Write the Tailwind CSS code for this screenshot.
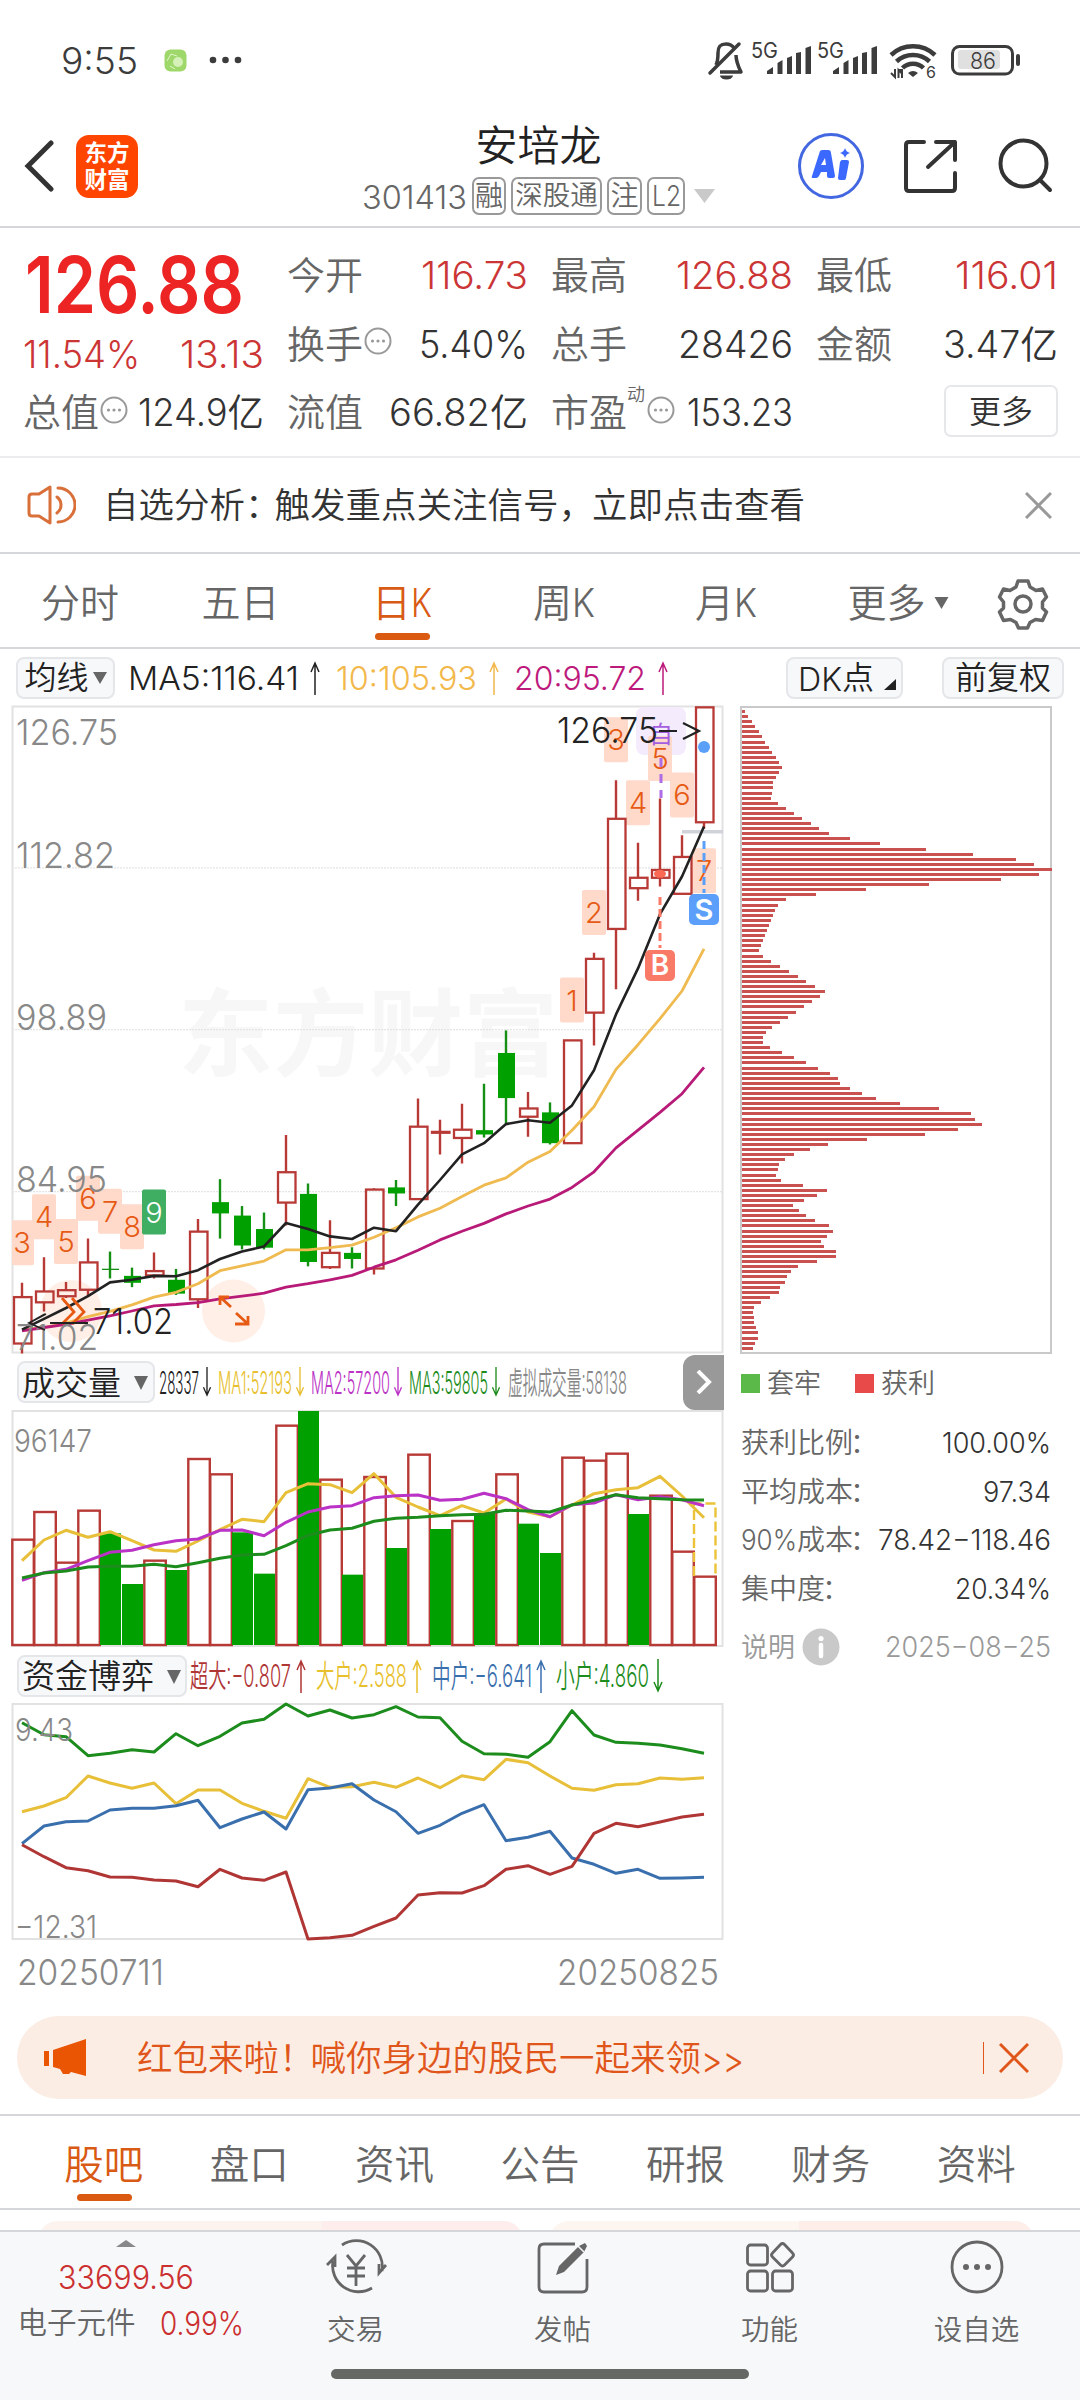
<!DOCTYPE html>
<html lang="zh-CN">
<head>
<meta charset="utf-8">
<title>安培龙 301413</title>
<script src="https://cdn.jsdelivr.net/npm/@tailwindcss/browser@4"></script>
</head>
<body class="w-[1080px] h-[2400px] overflow-hidden bg-white text-[#333] font-['Inter','Noto_Sans_CJK_SC',sans-serif] font-[350] leading-none whitespace-nowrap">
<svg class="hidden">
  <symbol id="up" viewBox="0 0 14 34"><path d="M7 34V3M3 11L7 2l4 9" fill="none" stroke="currentColor" stroke-width="1.500"/></symbol>
  <symbol id="down" viewBox="0 0 14 34"><path d="M7 0v31M3 23L7 32l4-9" fill="none" stroke="currentColor" stroke-width="1.500"/></symbol>
  <symbol id="more" viewBox="0 0 28 28"><circle cx="14" cy="14" r="12.500" fill="none" stroke="#999" stroke-width="2"/><g fill="#999"><circle cx="8.500" cy="14" r="1.600"/><circle cx="14" cy="14" r="1.600"/><circle cx="19.500" cy="14" r="1.600"/></g></symbol>
  <symbol id="tri" viewBox="0 0 14 12"><path d="M0 0h14L7 12z" fill="currentColor"/></symbol>
</svg>
<div class="flex flex-col w-[1080px] h-[2400px]">

<!-- status bar -->
<div class="h-[100px] pt-[20px] pl-[61px] flex items-center shrink-0 text-[#3c3c3c]">
  <span data-w="77" class="text-[37px]">9:55</span>
  <svg class="ml-[26px] w-[23px] h-[23px]" viewBox="0 0 23 23"><rect x=".5" y=".5" width="22" height="22" rx="6" fill="#9fd86a"/><circle cx="14" cy="13" r="5" fill="#d5f0b8"/><path d="M3 12l4-7 6 2M6 17l5 3" stroke="#e2f6cd" fill="none"/></svg>
  <svg class="ml-[22px] w-[34px] h-[8px]" viewBox="0 0 34 8"><g fill="#3c3c3c"><circle cx="4" cy="4" r="3.300"/><circle cx="16.500" cy="4" r="3.300"/><circle cx="29" cy="4" r="3.300"/></g></svg>
  <svg class="ml-[463px] w-[320px] h-[44px]" viewBox="706 38 320 44" fill="none" stroke="#3c3c3c">
    <path d="M716 65c2-4 2-8 2-12 0-8 4-9 8-9s6 1 8 4" stroke-width="3.500"/><path d="M736 55c0 7 2 11 5 17H720" stroke-width="3.500" stroke-linejoin="round"/><path d="M710 73L739 44" stroke-width="3.500" stroke-linecap="round"/><path d="M720 75.500h13a6.500 4 0 0 1-13 0z" fill="#3c3c3c" stroke="none"/>
    <g fill="#3c3c3c" stroke="none"><text x="751" y="58" font-size="21" font-weight="400" textLength="27" lengthAdjust="spacingAndGlyphs">5G</text><text x="817" y="58" font-size="21" font-weight="400" textLength="27" lengthAdjust="spacingAndGlyphs">5G</text>
    <path d="M767 74v-3l6-4v7zM777.500 74V63l5-3v14zM787 74V58l5-2v18zM796 74V53l5-1v22zM805.500 74V48l5.500-2v28z"/><path d="M833 74v-3l6-4v7zM843.500 74V63l5-3v14zM853 74V58l5-2v18zM862 74V53l5-1v22zM871.500 74V48l5.500-2v28z"/>
    <path d="M913 77l-5-4a8 8 0 0 1 10 0z"/><text x="926" y="78" font-size="16" font-weight="400">6</text></g>
    <path d="M891 55a32 32 0 0 1 44 0M896.500 61.500a24 24 0 0 1 33 0M902.500 68a15 15 0 0 1 21 0" stroke-width="4.500"/><path d="M891 73l4 4v-8M902 78v-8l-3 0M898.500 78v-8l4 4" stroke-width="2"/>
    <rect x="952.500" y="46.500" width="60" height="27.500" rx="7" stroke-width="3"/><rect x="958" y="50" width="42" height="19" rx="3" fill="#e0e0e0" stroke="none"/><path d="M1018 56v8" stroke-width="4" stroke-linecap="round"/><text x="970" y="69" font-size="23" fill="#3c3c3c" stroke="none" textLength="26" lengthAdjust="spacingAndGlyphs">86</text>
  </svg>
</div>

<!-- title bar -->
<div class="h-[128px] shrink-0 border-b-2 border-[#d6d7da] flex justify-between pl-[24px] pr-[26px]">
  <div class="flex w-[300px] h-[132px] items-center">
    <svg class="w-[32px] h-[52px]" viewBox="0 0 32 52"><path d="M27 3L4 26l23 23" fill="none" stroke="#333" stroke-width="5" stroke-linecap="round"/></svg>
    <div class="ml-[20px] w-[62px] h-[63px] rounded-[13px] bg-[#ff4500] text-white font-bold text-[22.500px] leading-[27px] flex flex-col items-center justify-center"><span>东方</span><span>财富</span></div>
  </div>
  <div class="flex flex-col items-center w-[400px] pt-[22px]">
    <div class="text-[42px] leading-[48px] text-[#222] mr-[1px]">安培龙</div>
    <div class="flex items-center mt-[7px] mr-[1px] text-[#666] text-[28px]">
      <span data-w="105" class="text-[33px]">301413</span>
      <span class="ml-[5px] w-[34px] h-[38px] border-2 border-[#999] rounded-[7px] flex items-center justify-center">融</span>
      <span class="ml-[5px] w-[91px] h-[38px] border-2 border-[#999] rounded-[7px] flex items-center justify-center text-[27.500px]">深股通</span>
      <span class="ml-[5px] w-[35px] h-[38px] border-2 border-[#999] rounded-[7px] flex items-center justify-center">注</span>
      <span class="ml-[5px] w-[38px] h-[38px] border-2 border-[#999] rounded-[7px] flex items-center justify-center"><span data-w="29" class="text-[28px]">L2</span></span>
      <svg class="ml-[9px] w-[21px] h-[14px] text-[#c9c9c9]" preserveAspectRatio="none" viewBox="0 0 14 12"><path d="M0 0h14L7 12z" fill="currentColor"/></svg>
    </div>
  </div>
  <svg class="ml-[40px] mt-[30px] w-[260px] h-[70px]" viewBox="794 130 260 70" fill="none">
    <circle cx="831" cy="166" r="31.500" stroke="#4267e0" stroke-width="3"/>
    <path fill-rule="evenodd" d="M820 151q1-1 3-1h5q3 0 3 3l4 23q0 2-2 2h-4q-2 0-2-2v-4h-6l-2 4q-1 2-3 2h-3q-2 0-1-2zM821 165h5l-1-7zM840 162q1-2 2-2h5q2 0 2 2l-3 16q0 2-2 2h-4q-2 0-2-2zM845 148q1 4 5 5q-4 1-5 5q-1-4-5-5q4-1 5-5z" fill="#3b68ff"/>
    <path d="M924 142h-15q-3 0-3 3v43q0 3 3 3h43q3 0 3-3v-15M936 142h19v18M955 142l-27 25" stroke="#333" stroke-width="4" stroke-linecap="round" stroke-linejoin="round"/>
    <circle cx="1023.500" cy="163.500" r="23" stroke="#333" stroke-width="4"/><path d="M1040 180l10 10" stroke="#333" stroke-width="4" stroke-linecap="round"/>
  </svg>
</div>

<!-- quote -->
<div class="h-[230px] shrink-0 border-b-2 border-[#ececee] flex gap-[24px] pl-[23px] text-[38px] text-[#666]">
  <div class="w-[241px] flex flex-col pt-[18px]">
    <div class="h-[78px] flex items-center text-[#ec2424] font-semibold"><span data-w="219" class="text-[78px] ml-[2px]">126.88</span></div>
    <div class="h-[60px] flex items-center justify-between text-[#cb3535]"><span data-w="117" class="text-[38px]">11.54%</span><span data-w="84" class="text-[38px]">13.13</span></div>
    <div class="h-[56px] flex items-center"><span>总值</span><svg class="w-[28px] h-[28px] ml-[1px] -mt-[4px]"><use href="#more"/></svg><span data-w="126" class="text-[38px] ml-auto text-[#333]">124.9亿</span></div>
  </div>
  <div class="w-[241px] flex flex-col pt-[12px] -ml-[1px]">
    <div class="h-[69px] flex items-center justify-between"><span>今开</span><span data-w="107" class="text-[38px] text-[#cb3535]">116.73</span></div>
    <div class="h-[69px] flex items-center"><span>换手</span><svg class="w-[28px] h-[28px] ml-[1px] -mt-[6px]"><use href="#more"/></svg><span data-w="109" class="text-[38px] ml-auto text-[#333]">5.40%</span></div>
    <div class="h-[68px] flex items-center justify-between"><span>流值</span><span data-w="139" class="text-[38px] text-[#333]">66.82亿</span></div>
  </div>
  <div class="w-[242px] flex flex-col pt-[12px] -ml-[1px]">
    <div class="h-[69px] flex items-center justify-between"><span>最高</span><span data-w="117" class="text-[38px] text-[#cb3535]">126.88</span></div>
    <div class="h-[69px] flex items-center justify-between"><span>总手</span><span data-w="115" class="text-[38px] text-[#333]">28426</span></div>
    <div class="h-[68px] flex items-center"><span>市盈</span><span class="text-[18px] -mt-[34px] -mr-[2px]">动</span><svg class="w-[28px] h-[28px] ml-[4px] -mt-[4px]"><use href="#more"/></svg><span data-w="106" class="text-[38px] ml-auto text-[#333]">153.23</span></div>
  </div>
  <div class="w-[242px] flex flex-col pt-[12px] -ml-[1px]">
    <div class="h-[69px] flex items-center justify-between"><span>最低</span><span data-w="103" class="text-[38px] text-[#cb3535]">116.01</span></div>
    <div class="h-[69px] flex items-center justify-between"><span>金额</span><span data-w="115" class="text-[38px] text-[#333]">3.47亿</span></div>
    <div class="h-[66px] flex items-center justify-end text-[#333]"><span class="w-[114px] h-[52px] border-2 border-[#e6e7e9] rounded-[7px] flex items-center justify-center text-[32px] pt-[2px]">更多</span></div>
  </div>
</div>

<!-- notice -->
<div class="h-[96px] shrink-0 border-b-2 border-[#d6d7da] flex items-center pl-[26px] pr-[28px]">
  <svg class="w-[50px] h-[42px]" viewBox="26 484 50 42" fill="none" stroke="#d9703a" stroke-width="3" stroke-linejoin="round" stroke-linecap="round"><path d="M50 487L39 494H32q-3 0-3 3v16q0 3 3 3h7l11 7zM57 497a10 10 0 0 1 0 16M58 488a17 17 0 0 1 0 34"/></svg>
  <span class="ml-[27px] pt-[1px] text-[35.500px] text-[#333]">自选分析<span class="tracking-[-6px]">：</span>触发重点关注信号<span class="tracking-[-2px]">，</span>立即点击查看</span>
  <svg class="ml-auto w-[27px] h-[27px]" viewBox="0 0 27 27"><path d="M1 1l25 25M26 1L1 26" stroke="#999" stroke-width="3"/></svg>
</div>

<!-- period tabs -->
<div class="h-[95px] shrink-0 border-b-2 border-[#d6d7da] flex text-[39px] text-[#666] *:pt-[4px]">
  <div class="w-[160px] flex items-center justify-center">分时</div>
  <div class="w-[161px] flex items-center justify-center">五日</div>
  <div class="w-[162px] relative flex items-center justify-center text-[#d85a14]">日<span data-w="21" class="text-[39px]">K</span><i class="absolute left-[54px] bottom-[7px] w-[55px] h-[7px] rounded-full bg-[#d95a10]"></i></div>
  <div class="w-[162px] flex items-center justify-center">周<span data-w="23" class="text-[39px]">K</span></div>
  <div class="w-[162px] flex items-center justify-center">月<span data-w="23" class="text-[39px]">K</span></div>
  <div class="w-[182px] flex items-center justify-center">更多<svg class="ml-[8px] w-[15px] h-[12px]"><use href="#tri"/></svg></div>
  <svg class="ml-[8px] mt-[20px] w-[52px] h-[56px]" viewBox="-26 -26 52 52" fill="none" stroke="#666" stroke-width="3.500" stroke-linejoin="round"><path d="M-5-23h10l2 6 6 3.500 6.500-1.500 4 8-4 5v6l4 4-4 8.500-7-1-5.500 3-2.500 5.500h-9l-2.500-5.500-5.500-3-7 1-4-8.500 4-4v-6l-4-5 4-8 6.500 1.500 6-3.500z"/><circle r="8"/></svg>
</div>

<!-- chart area -->
<div class="h-[1353px] shrink-0 flex flex-col">
  <div class="h-[57px] shrink-0 flex items-center pl-[16px] pr-[16px] text-[33px] text-[#222]">
    <span class="w-[99px] h-[42px] border-2 border-[#e4e6ea] rounded-[8px] bg-[#f7f8fa] flex items-center justify-center text-[32px] pt-[1px]">均线<svg class="ml-[4px] w-[14px] h-[12px] text-[#666]"><use href="#tri"/></svg></span>
    <span data-w="171" class="text-[33px] ml-[13px]">MA5:116.41</span><svg class="ml-[9px] w-[14px] h-[34px]"><use href="#up"/></svg>
    <span class="flex items-center text-[#f2b84b]"><span data-w="141" class="text-[33px] ml-[14px]">10:105.93</span><svg class="ml-[10px] w-[14px] h-[34px]"><use href="#up"/></svg></span>
    <span class="flex items-center text-[#bd1a7c]"><span data-w="132" class="text-[33px] ml-[13px]">20:95.72</span><svg class="ml-[10px] w-[14px] h-[34px]"><use href="#up"/></svg></span>
    <span class="ml-auto w-[117px] h-[42px] border-2 border-[#e4e6ea] rounded-[8px] bg-[#f7f8fa] flex items-center pl-[10px] pt-[1px] text-[32px]"><span data-w="44" class="text-[33px]">DK</span>点<svg class="ml-[10px] mt-[12px] w-[12px] h-[11px]" viewBox="0 0 12 11"><path d="M12 0v11H0z" fill="#222"/></svg></span>
    <span class="ml-[39px] w-[122px] h-[42px] border-2 border-[#e4e6ea] rounded-[8px] bg-[#f7f8fa] flex items-center justify-center text-[32px] pt-[1px]">前复权</span>
  </div>
  <div class="flex">
    <div class="w-[740px] flex flex-col">
      <svg id="price" class="w-[740px] h-[647px] overflow-visible shrink-0" viewBox="0 706 740 647"></svg>
      <div class="h-[58px] shrink-0 flex items-center pl-[17px] text-[31px]">
        <span class="w-[138px] h-[42px] border-2 border-[#e4e6ea] rounded-[8px] bg-[#f7f8fa] flex items-center pl-[3px] pt-[2px] text-[33px] text-[#222]">成交量<svg class="ml-[13px] w-[14px] h-[14px] text-[#666]" viewBox="0 0 14 12" preserveAspectRatio="none"><path d="M0 0h14L7 12z" fill="currentColor"/></svg></span>
        <span data-w="40" class="text-[31px] ml-[4px] text-[#222]">28337</span><svg class="ml-[1px] w-[14px] h-[30px] text-[#222]"><use href="#down"/></svg>
        <span data-w="74" class="text-[31px] ml-[4px] text-[#e8bf2e]">MA1:52193</span><svg class="ml-[1px] w-[14px] h-[30px] text-[#e8bf2e]"><use href="#down"/></svg>
        <span data-w="79" class="text-[31px] ml-[4px] text-[#bb33c6]">MA2:57200</span><svg class="ml-[1px] w-[14px] h-[30px] text-[#bb33c6]"><use href="#down"/></svg>
        <span data-w="79" class="text-[31px] ml-[4px] text-[#1c8c1c]">MA3:59805</span><svg class="ml-[1px] w-[14px] h-[30px] text-[#1c8c1c]"><use href="#down"/></svg>
        <span data-w="119" class="text-[31px] ml-[5px] text-[#888]">虚拟成交量:58138</span>
        <span class="ml-auto mr-[16px] w-[41px] h-[55px] rounded-l-[12px] bg-[#999] flex items-center justify-center"><svg class="w-[16px] h-[24px]" viewBox="0 0 16 24"><path d="M2 1l11 11L2 23" fill="none" stroke="#fff" stroke-width="4"/></svg></span>
      </div>
      <svg id="vol" class="w-[740px] h-[236px] overflow-visible shrink-0" viewBox="0 1411 740 236"></svg>
      <div class="h-[57px] shrink-0 flex items-center pl-[17px] text-[31px]">
        <span class="w-[170px] h-[42px] border-2 border-[#e4e6ea] rounded-[8px] bg-[#f7f8fa] flex items-center pl-[3px] pt-[2px] text-[33px] text-[#222]">资金博弈<svg class="ml-[13px] w-[14px] h-[14px] text-[#666]" viewBox="0 0 14 12" preserveAspectRatio="none"><path d="M0 0h14L7 12z" fill="currentColor"/></svg></span>
        <span data-w="101" class="text-[31px] ml-[3px] text-[#b03535]">超大:−0.807</span><svg class="ml-[3px] w-[14px] h-[34px] text-[#b03535]"><use href="#up"/></svg>
        <span data-w="91" class="text-[31px] ml-[8px] text-[#e8bf2e]">大户:2.588</span><svg class="ml-[3px] w-[14px] h-[34px] text-[#e8bf2e]"><use href="#up"/></svg>
        <span data-w="100" class="text-[31px] ml-[8px] text-[#3a6fae]">中户:−6.641</span><svg class="ml-[2px] w-[14px] h-[34px] text-[#3a6fae]"><use href="#up"/></svg>
        <span data-w="93" class="text-[31px] ml-[8px] text-[#1c8c1c]">小户:4.860</span><svg class="ml-[2px] w-[14px] h-[34px] text-[#1c8c1c]"><use href="#down"/></svg>
      </div>
      <svg id="fund" class="w-[740px] h-[236px] overflow-visible shrink-0" viewBox="0 1704 740 236"></svg>
      <div class="h-[64px] flex items-center justify-between pl-[17px] pr-[21px] text-[#888]"><span data-w="147" class="text-[35px]">20250711</span><span data-w="162" class="text-[35px]">20250825</span></div>
    </div>
    <div class="w-[340px] flex flex-col text-[28px] text-[#666]">
      <div class="w-[312px] h-[648px] border-2 border-[#c9c9c9] flex flex-col justify-between pt-[2px] pb-[1px]" id="chips"></div>
      <div class="flex items-center h-[58px] text-[27px]"><i class="w-[19px] h-[19px] bg-[#5ab948] mr-[7px] ml-[1px]"></i>套牢<i class="w-[19px] h-[19px] bg-[#e84a4a] ml-[34px] mr-[7px]"></i>获利</div>
      <div class="flex flex-col pt-[7px] pl-[1px] w-[311px] *:h-[48.500px] *:flex *:items-center *:justify-between">
        <div><span>获利比例<span class="-ml-[3px]">：</span></span><span data-w="109" class="text-[28px] text-[#333]">100.00%</span></div>
        <div><span>平均成本<span class="-ml-[3px]">：</span></span><span data-w="68" class="text-[28px] text-[#333]">97.34</span></div>
        <div><span class="flex items-center -mr-[16px]"><span data-w="56" class="text-[28px]">90%</span>成本<span class="-ml-[3px]">：</span></span><span data-w="173" class="text-[28px] text-[#333]">78.42−118.46</span></div>
        <div><span>集中度<span class="-ml-[3px]">：</span></span><span data-w="96" class="text-[28px] text-[#333]">20.34%</span></div>
      </div>
      <div class="flex items-center pl-[1px] w-[311px] h-[68px] text-[#999]"><span class="text-[27px]">说明</span><svg class="ml-[7px] w-[38px] h-[38px]" viewBox="0 0 38 38"><circle cx="19" cy="19" r="18.500" fill="#c9c9c9"/><circle cx="19" cy="10.500" r="2.600" fill="#fff"/><path d="M19 17v11" stroke="#fff" stroke-width="4.500" stroke-linecap="round"/></svg><span data-w="166" class="text-[28px] ml-auto">2025−08−25</span></div>
    </div>
  </div>
</div>

<!-- invitation -->
<div class="shrink-0 h-[115px] border-b-2 border-[#d6d7da] pt-[15px] px-[17px] -mt-[1px]">
  <div class="h-[83px] rounded-full bg-[#fcede4] flex items-center pl-[27px] pr-[34px] text-[#e0561a]">
    <svg class="w-[43px] h-[38px]" viewBox="0 0 43 38"><path d="M0 12h5v15H0zM9 11L42 0v37l-15-4-2 2h-6l-3-5-7-2z" fill="#ea5504"/></svg>
    <span class="ml-[50px] pt-[3px] text-[35.500px] flex items-center">红包来啦<span class="tracking-[-4px]">！</span>喊你身边的股民一起来领<span data-w="43" class="text-[37px]">&gt;&gt;</span></span>
    <i class="ml-auto w-px h-[32px] bg-[#e0561a]"></i>
    <svg class="ml-[15px] w-[30px] h-[30px]" viewBox="0 0 30 30"><path d="M1 1l28 28M29 1L1 29" stroke="#e0561a" stroke-width="3"/></svg>
  </div>
</div>

<!-- section tabs -->
<div class="shrink-0 h-[94px] border-b-2 border-[#d6d7da] flex px-[31px] text-[39.500px] text-[#666] *:flex-1 *:flex *:items-center *:justify-center *:pt-[7px]">
  <div class="relative text-[#d85a14]">股吧<i class="absolute left-[46px] bottom-[7px] w-[55px] h-[7px] rounded-full bg-[#d95a10]"></i></div><div>盘口</div><div>资讯</div><div>公告</div><div>研报</div><div>财务</div><div>资料</div>
</div>
<div class="shrink-0 h-[20px] pt-[11px] pl-[38px] flex gap-[26px] overflow-hidden">
  <div class="w-[485px] h-[40px] rounded-[20px] overflow-hidden flex bg-[#fdf3ee]"><i class="ml-[284px] flex-1 bg-[#fdeeed]"></i></div>
  <div class="w-[485px] h-[40px] rounded-[20px] overflow-hidden flex bg-[#fdf5f0]"><i class="ml-[250px] flex-1 bg-[#fdeeea]"></i></div>
</div>

<!-- bottom bar -->
<div class="flex-1 bg-[#f7f8fa] border-t-2 border-[#d4d6d9] flex flex-col items-center">
  <div class="w-full h-[137px] flex text-[28.500px] text-[#666]">
    <div class="w-[252px] flex flex-col items-center pt-[8px]">
      <svg class="w-[20px] h-[7px]" viewBox="0 0 20 7"><path d="M10 0l10 7H0z" fill="#888"/></svg>
      <span class="h-[58px] flex items-center text-[#cb2f2f]"><span data-w="136" class="text-[33px]">33699.56</span></span>
      <span class="h-[36px] flex items-center ml-[9px] text-[29.500px]">电子元件<span data-w="84" class="text-[32px] ml-[24px] text-[#cb2f2f]">0.99%</span></span>
    </div>
    <div class="w-[207px] flex flex-col items-center pt-[6px]">
      <svg class="w-[64px] h-[58px]" viewBox="323 2238 64 58" fill="none" stroke="#666" stroke-width="2.800"><path d="M341 2245a26 26 0 0 1 40 26M371 2288a26 26 0 0 1-39-27M326 2265l8-8 0 10M385 2265l-7 8v-9"/><path d="M346 2255l9 11 9-11M355 2266v20M346 2268h18M346 2276h18"/></svg><span class="mt-[20px]">交易</span></div>
    <div class="w-[207px] flex flex-col items-center pt-[6px]">
      <svg class="w-[64px] h-[58px]" viewBox="530 2238 64 58" fill="none" stroke="#666" stroke-width="2.800"><path d="M574 2244h-31q-5 0-5 5v38q0 5 5 5h38q5 0 5-5v-28"/><path d="M555 2275l3-9 20-20 6-3 2 3-3 6-20 20z" fill="#666" stroke="none"/><path d="M576 2245l7 7" stroke="#f7f8fa" stroke-width="1.500"/></svg><span class="mt-[20px]">发帖</span></div>
    <div class="w-[207px] flex flex-col items-center pt-[6px]">
      <svg class="w-[64px] h-[58px]" viewBox="737 2238 64 58" fill="none" stroke="#666" stroke-width="2.800"><rect x="746.500" y="2245" width="20" height="20" rx="3"/><rect x="746.500" y="2271" width="20" height="20" rx="3"/><rect x="771.500" y="2271" width="20" height="20" rx="3"/><path d="M779.500 2244.500q2-2 4 0l8 8.500q2 2 0 4l-8 8q-2 2-4 0l-8-8q-2-2 0-4z"/></svg><span class="mt-[20px]">功能</span></div>
    <div class="w-[207px] flex flex-col items-center pt-[6px]">
      <svg class="w-[64px] h-[58px]" viewBox="0 0 64 58"><circle cx="32" cy="29" r="25" fill="none" stroke="#666" stroke-width="2.800"/><g fill="#666"><circle cx="21" cy="29" r="3"/><circle cx="32" cy="29" r="3"/><circle cx="43" cy="29" r="3"/></g></svg><span class="mt-[20px]">设自选</span></div>
  </div>
  <div class="w-[418px] h-[10px] rounded-full bg-[#666866]"></div>
</div>
</div>

<script>
// numeric labels keep a fixed advance width
document.querySelectorAll('[data-w]').forEach(el => {
  const w = el.dataset.w, t = el.textContent;
  el.innerHTML = `<svg width="${w}" height="1em" class="block overflow-visible"><text x="0" y=".865em" fill="currentColor" textLength="${w}" lengthAdjust="spacingAndGlyphs"></text></svg>`;
  el.querySelector('text').textContent = t;
});
const RED = '#b83a36', GREEN = '#00a000';
const X = i => 22 + 22 * i;
const line = (v, y, c, w = 3) => `<polyline fill="none" stroke="${c}" stroke-width="${w}" stroke-linejoin="round" points="${v.map((p, i) => X(i) + ',' + y(p).toFixed(1)).join(' ')}"/>`;
const txt = (x, y, s, w, c, t, a = '') => `<text x="${x}" y="${y}" font-size="${s}" ${w ? `textLength="${w}" lengthAdjust="spacingAndGlyphs"` : ''} fill="${c}" ${a}>${t}</text>`;

// daily candles: high, body top, body bottom, low, direction
const P = v => 690 + v / 2.306;
const K = [[1367,1400,1507,1530,1],[1308,1387,1412,1433,1],[1365,1384,1398,1402,1],[1265,1320,1383,1400,1],[1295,1336,1336,1357,0],[1332,1351,1367,1377,0],[1297,1340,1350,1357,1],[1335,1360,1392,1395,0],[1220,1249,1405,1425,1],[1128,1181,1207,1265,0],[1190,1212,1281,1290,0],[1205,1243,1286,1290,0],[1026,1112,1182,1235,1],[1138,1162,1319,1329,0],[1223,1298,1331,1335,1],[1285,1298,1312,1334,0],[1149,1152,1334,1348,1],[1130,1147,1161,1190,0],[942,1007,1174,1174,1],[991,1019,1021,1071,1],[954,1014,1033,1092,1],[908,1015,1025,1032,0],[785,837,941,1000,0],[927,965,984,1030,1],[951,974,1045,1048,0],[808,808,1045,1045,1],[606,620,744,820,1],[208,297,551,690,1],[352,433,457,486,1],[250,415,433,453,1],[335,385,470,470,1],[39,40,305,320,1]];
const MA5 = [1475,1450,1425,1398,1366,1360,1351,1352,1338,1312,1295,1283,1229,1243,1260,1266,1240,1248,1187,1130,1071,1045,1001,992,998,958,877,748,642,517,430,315];
const MA10 = [1475,1470,1460,1445,1433,1418,1400,1389,1369,1339,1328,1317,1291,1291,1286,1280,1262,1240,1215,1195,1168,1142,1125,1089,1064,1015,961,875,818,758,694,597];
const MA20 = [1478,1470,1463,1453,1443,1432,1420,1417,1413,1404,1398,1391,1377,1369,1360,1350,1331,1314,1292,1268,1248,1230,1208,1190,1174,1147,1111,1056,1015,974,931,870];
let h = txt(178, 1069, 95, 380, '#f7f7f7', '东方财富', 'font-weight="700"');
h += '<rect x="12.500" y="706.500" width="710" height="646" fill="none" stroke="#e2e2e2" stroke-width="2"/>';
[867.8, 1029.6, 1191.7].forEach(y => h += `<path d="M12 ${y}H723" stroke="#e4e4e4" stroke-width="1.200" stroke-dasharray="2 1"/>`);
h += '<ellipse cx="71" cy="1311" rx="31" ry="31" fill="#ffefe7"/><circle cx="233.500" cy="1311" r="31.500" fill="#ffefe7"/>';
const badge = (i, top, n, bg = '#ffd9c9', c = '#e65a14') => { const l = i ? X(i) - 12 : 12, y = P(top); return `<rect x="${l}" y="${y}" width="${i ? 24 : 22}" height="45" rx="2" fill="${bg}"/>` + txt(X(i), y + 33, 29, 0, c, n, 'text-anchor="middle"'); };
[[0,1223,3],[1,1163,4],[2,1220,5],[3,1120,6],[4,1150,7],[5,1186,8]].forEach(b => h += badge(...b));
h += badge(6, 1152, 9, '#3fae62', '#fff');
[[25,663,1],[26,461,2],[27,63,3],[28,208,4]].forEach(b => h += badge(...b));
h += '<rect x="636" y="707" width="50" height="48" rx="8" fill="#f4ebfd"/>' + badge(29, 106, 5) + txt(649, 743, 24, 0, '#a45ee0', '自', 'font-weight="400"') + '<path d="M661 758V798" stroke="#b06be6" stroke-width="3" stroke-dasharray="9 7"/>' + badge(30, 190, 6) + badge(31, 365, 7);
K.forEach(([hi, t, b, lo, up], i) => {
  const c = up ? RED : '#159015', x = X(i);
  if (up) h += `<path d="M${x} ${P(hi)}V${P(t)}M${x} ${P(b)}V${P(lo)}" stroke="${c}" stroke-width="2.400"/><rect x="${x - 8}" y="${P(t)}" width="17.500" height="${Math.max(0, (b - t) / 2.306)}" fill="none" stroke="${c}" stroke-width="2.300"/>`;
  else h += `<path d="M${x} ${P(hi)}V${P(lo)}" stroke="${c}" stroke-width="2.400"/>` + (t === b ? `<path d="M${x - 8} ${P(t)}h17" stroke="${c}" stroke-width="1.300"/>` : `<rect x="${x - 8}" y="${P(t)}" width="17" height="${(b - t) / 2.306}" fill="${GREEN}"/>`);
});
h += `<ellipse cx="660" cy="${P(424)}" rx="6" ry="4" fill="#fb6a55"/><path d="M682 831.800H723" stroke="#d0d3da" stroke-width="3.500"/>`;
h += line(MA10, P, '#efba50', 2.8) + line(MA20, P, '#b81a78', 2.8) + line(MA5, P, '#222', 2.6);
h += '<circle cx="704" cy="747" r="6" fill="#5a9ff8"/><path d="M704 841V893" stroke="#5a9ff8" stroke-width="3" stroke-dasharray="8 4"/><path d="M660 897V948" stroke="#fa7a68" stroke-width="3" stroke-dasharray="8 4"/>';
h += '<rect x="689" y="894" width="30" height="31" rx="5" fill="#5c9ffa"/><rect x="645" y="950" width="30" height="31" rx="5" fill="#fa7a68"/>' + txt(704, 920, 29, 0, '#fff', 'S', 'text-anchor="middle" font-weight="600"') + txt(660, 975, 28, 0, '#fff', 'B', 'text-anchor="middle" font-weight="600"');
h += '<path d="M62 1298l12 14-12 12M72 1298l12 14-12 12M231 1307l-11-10M220 1305v-8h9M236 1313l12 11M248 1316v8h-13" fill="none" stroke="#e65a14" stroke-width="2.800"/>';
[[745,'126.75',102],[868,'112.82',99],[1030,'98.89',91],[1192,'84.95',91],[1350,'71.02',82]].forEach(([y, t, w]) => h += txt(16, y, 36, w, '#888', t));
h += txt(93, 1334, 36, 80, '#222', '71.02') + '<path d="M50 1323H88M46 1314l-17 9 16 7M29 1323l16-9" fill="none" stroke="#222" stroke-width="1.800"/>';
h += txt(557, 743, 36, 101, '#222', '126.75') + '<path d="M659 731H677M683 723l16 8-16 8" fill="none" stroke="#222" stroke-width="2.200"/>';
price.innerHTML = h;

// turnover volume
const V = v => 1350 + v / 3;
const VT = [569,486,638,482,-550,-702,632,-660,327,373,-547,-671,227,-183,389,-674,381,-594,314,-537,513,-491,373,-521,-609,323,332,311,-492,437,605,680];
const V1 = [632,570,541,562,545,572,600,604,573,539,508,515,428,401,404,428,371,442,471,497,467,489,447,486,500,465,431,419,413,379,438,503];
const V2 = [691,668,658,632,607,601,584,572,567,541,540,557,517,486,471,467,443,437,435,451,448,430,446,479,500,464,459,434,449,440,449,467];
const V3 = [684,669,663,651,649,649,643,650,638,625,615,613,587,556,540,535,514,505,502,497,494,493,481,483,486,465,451,434,443,446,449,450];
h = '<rect x="12.500" y="1411" width="710" height="235" fill="none" stroke="#e2e2e2" stroke-width="2"/>';
VT.forEach((v, i) => { const y = V(Math.abs(v)), x = X(i) - 10; h += v < 0 ? `<rect x="${x}" y="${y}" width="21" height="${1645 - y}" fill="${GREEN}"/>` : `<rect x="${x + .3}" y="${y}" width="21.500" height="${1645 - y}" fill="none" stroke="${RED}" stroke-width="2.400"/>`; });
h += '<path d="M694 1576V1503.500H715.500V1576" fill="none" stroke="#ecc238" stroke-width="2.400" stroke-dasharray="10 4"/>';
h += line(V1, V, '#e8bf38') + line(V2, V, '#bb33c6') + line(V3, V, '#1c8c1c');
h += txt(14, 1452, 31, 78, '#888', '96147');
vol.innerHTML = h;

// capital flow by holder size
const F = v => 1650 + v / 3;
h = '<rect x="12.500" y="1704" width="710" height="235" fill="none" stroke="#e2e2e2" stroke-width="2"/>';
h += line([218,254,260,317,310,299,306,251,287,259,219,208,162,198,180,204,194,170,201,203,274,311,313,322,275,182,255,277,280,285,296,310], F, '#1c8c1c');
h += line([485,468,443,378,399,415,399,461,420,420,460,484,505,386,412,410,397,412,384,413,377,389,328,338,378,415,421,404,401,384,388,383], F, '#e8bf38');
h += line([581,528,515,513,480,475,475,467,451,533,507,486,537,419,414,401,450,485,550,526,490,464,572,562,544,624,643,670,658,685,684,682], F, '#3a6fae');
h += line([584,620,653,662,681,682,690,693,710,658,684,691,666,867,863,856,829,804,735,728,729,707,658,647,673,649,550,520,530,516,501,493], F, '#b03535');
h += txt(15, 1741, 31, 58, '#888', '9.43') + txt(15, 1938, 31, 82, '#888', '−12.31');
fund.innerHTML = h;

// cost distribution
const C = [72,81,92,102,112,122,132,143,152,163,173,183,173,163,156,154,151,150,170,194,219,243,269,293,323,387,477,615,754,884,938,993,954,838,622,434,283,194,170,162,155,150,144,138,131,125,118,112,125,150,176,203,229,255,281,310,297,273,248,225,200,176,151,135,126,126,146,183,219,255,291,326,350,357,387,421,464,537,653,749,761,783,711,612,437,320,267,217,192,173,169,164,179,246,318,287,248,216,233,254,281,323,336,318,298,308,345,345,287,229,209,196,191,176,172,146,118,99,95,98,98,104,109,109,101,95];
chips.innerHTML = C.map(v => `<i class="h-[3px] bg-[#c95250]" style="width:${((v - 62) / 3).toFixed(1)}px"></i>`).join('');
</script>
</body>
</html>
